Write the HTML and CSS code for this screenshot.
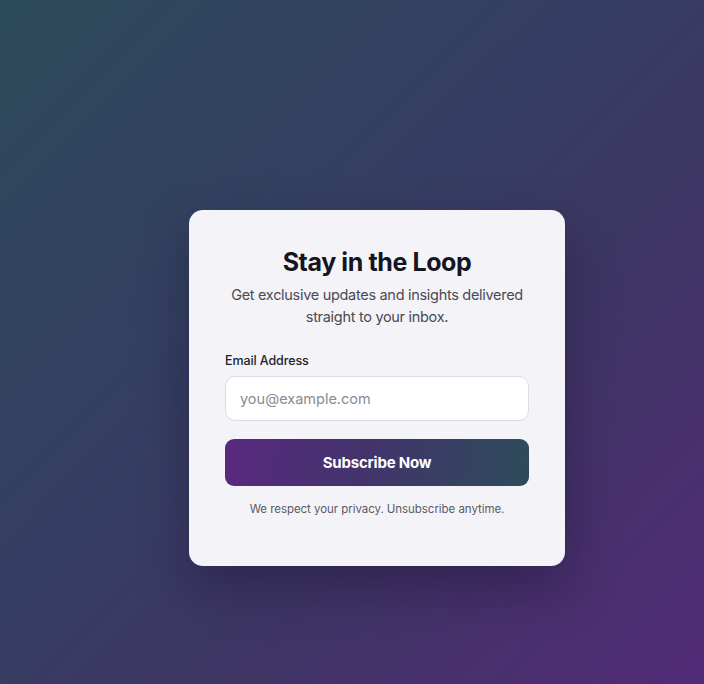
FILE: index.html
```html
<!DOCTYPE html>
<html>
<head>
<meta charset="utf-8">
<link rel="stylesheet" href="styles.css">
</head>
<body>
<main class="stage">
  <section class="card">
    <h1 class="title">Stay in the Loop</h1>
    <p class="subtitle">Get exclusive updates and insights delivered straight to your inbox.</p>
    <form class="form">
      <label class="label" for="email">Email Address</label>
      <input class="input" id="email" type="email" placeholder="you@example.com">
      <button class="button" type="button">Subscribe Now</button>
    </form>
    <p class="privacy">We respect your privacy. Unsubscribe anytime.</p>
  </section>
</main>
</body>
</html>
```
FILE: styles.css
```css
html, body {
  margin: 0;
  padding: 0;
  height: 100%;
}
body {
  font-family: Inter, "Noto Sans", sans-serif;
  background: linear-gradient(135deg, #2c4a5a 0%, #353f62 40%, #3e3564 65%, #532b78 100%);
  overflow: hidden;
}
.stage {
  box-sizing: border-box;
  height: 100%;
  padding: 210px 0 0 189px;
}
.card {
  box-sizing: border-box;
  width: 376px;
  height: 356px;
  background: #f4f4f8;
  border-radius: 14px;
  padding: 36px 36px 0;
  box-shadow: 0 20px 50px rgba(20, 10, 40, 0.35);
  text-align: center;
}
.title {
  margin: 0;
  font-size: 25px;
  line-height: 32px;
  font-weight: 700;
  color: #15151f;
  letter-spacing: -0.4px;
}
.subtitle {
  margin: 6px -4px 0;
  font-size: 14.5px;
  line-height: 22px;
  color: #4a4a55;
  letter-spacing: -0.3px;
}
.form {
  display: flex;
  flex-direction: column;
  margin-top: 24px;
  text-align: left;
}
.label {
  font-size: 12.5px;
  line-height: 18px;
  font-weight: 500;
  color: #22222c;
  margin-bottom: 6px;
  letter-spacing: -0.1px;
}
.input {
  box-sizing: border-box;
  height: 45px;
  width: 100%;
  border: 1px solid #dcdce2;
  border-radius: 10px;
  background: #ffffff;
  padding: 0 14px;
  font-family: Inter, "Noto Sans", sans-serif;
  font-size: 14.5px;
  color: #22222c;
  outline: none;
}
.input::placeholder {
  color: #8a8a94;
}
.button {
  margin-top: 18px;
  height: 47px;
  width: 100%;
  border: none;
  border-radius: 9px;
  background: linear-gradient(100deg, #5a2980 0%, #43336c 45%, #2c4c5a 100%);
  color: #ffffff;
  font-family: Inter, "Noto Sans", sans-serif;
  font-size: 15px;
  font-weight: 700;
  letter-spacing: -0.2px;
}
.privacy {
  margin: 15px 0 0;
  font-size: 11.5px;
  line-height: 16px;
  color: #5a5a66;
  letter-spacing: -0.05px;
}
```
